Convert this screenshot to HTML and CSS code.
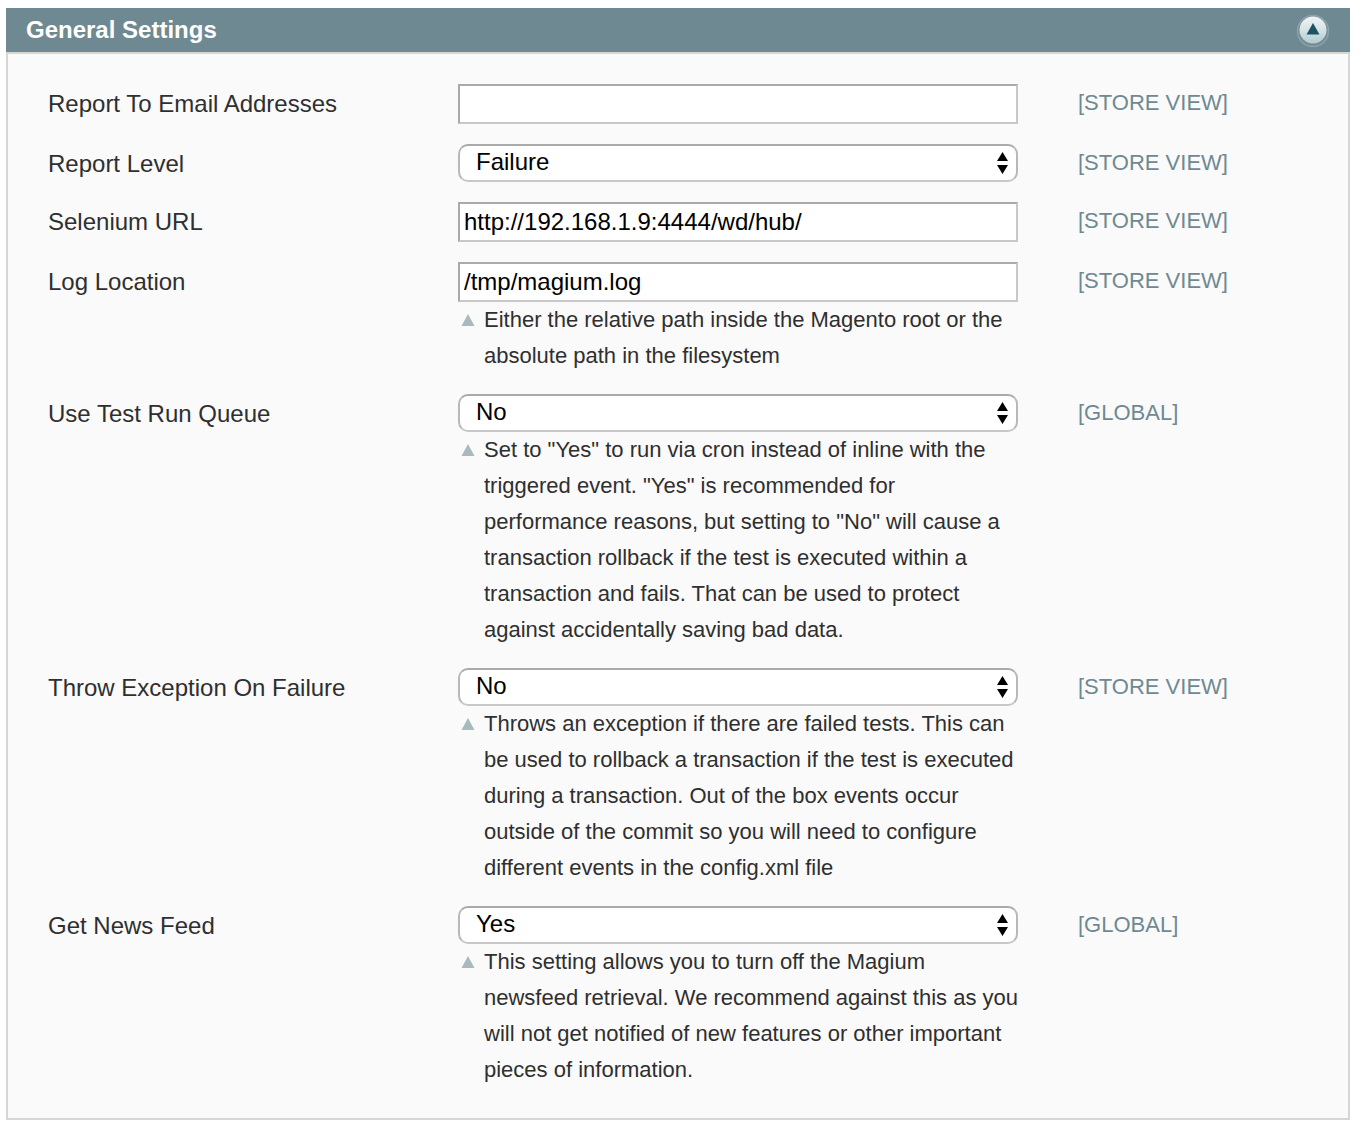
FILE: index.html
```html
<!DOCTYPE html>
<html lang="en">
<head>
  <meta charset="utf-8">
  <meta name="viewport" content="width=device-width, initial-scale=1">
  <title>General Settings</title>
  <link rel="stylesheet" href="styles.css">
</head>
<body>
  <svg width="0" height="0" class="symbols" aria-hidden="true">
    <symbol id="hint" viewBox="0 0 14 12"><path d="M7 0L13.500 12H0.500z" fill="#a9babf"/></symbol>
    <symbol id="updown" viewBox="0 0 12 22"><path d="M6.500 0L12 9H1zM1 13H12L6.500 22z"/></symbol>
  </svg>
  <section class="section">
    <header class="section-head">
      <h2 class="section-title">General Settings</h2>
      <button class="toggle" type="button" aria-label="Collapse General Settings" aria-expanded="true">
        <svg width="34" height="34" viewBox="0 0 34 34" aria-hidden="true">
          <defs>
            <linearGradient id="disc" x1="0" y1="0" x2="0" y2="1">
              <stop offset="0" stop-color="#f0f5f6"/>
              <stop offset="0.5" stop-color="#d5e2e4"/>
              <stop offset="1" stop-color="#b0ccd0"/>
            </linearGradient>
          </defs>
          <circle cx="17" cy="17" r="15.5" fill="#748d95" stroke="#8ba2a8" stroke-width="1.5"/>
          <circle cx="17" cy="16" r="13.5" fill="url(#disc)"/>
          <path d="M17 9L23.500 20.500H10.500z" fill="#1f5260"/>
        </svg>
      </button>
    </header>
    <form class="fields">
      <div class="row">
        <label class="label" for="email">Report To Email Addresses</label>
        <div class="control"><input class="text" id="email" type="text"></div>
        <span class="scope">[STORE VIEW]</span>
      </div>
      <div class="row">
        <label class="label" for="level">Report Level</label>
        <div class="control">
          <div class="select-box">
            <select class="select" id="level"><option>Failure</option></select>
            <svg class="arrows" width="12" height="22" aria-hidden="true"><use href="#updown"/></svg>
          </div>
        </div>
        <span class="scope">[STORE VIEW]</span>
      </div>
      <div class="row">
        <label class="label" for="selenium">Selenium URL</label>
        <div class="control"><input class="text" id="selenium" type="text" value="http://192.168.1.9:4444/wd/hub/"></div>
        <span class="scope">[STORE VIEW]</span>
      </div>
      <div class="row">
        <label class="label" for="log">Log Location</label>
        <div class="control">
          <input class="text" id="log" type="text" value="/tmp/magium.log">
          <div class="note">
            <svg class="hint" width="14" height="12" aria-hidden="true"><use href="#hint"/></svg>
            <p class="note-text">Either the relative path inside the Magento root or the absolute path in the filesystem</p>
          </div>
        </div>
        <span class="scope">[STORE VIEW]</span>
      </div>
      <div class="row">
        <label class="label" for="queue">Use Test Run Queue</label>
        <div class="control">
          <div class="select-box">
            <select class="select" id="queue"><option>Yes</option><option selected>No</option></select>
            <svg class="arrows" width="12" height="22" aria-hidden="true"><use href="#updown"/></svg>
          </div>
          <div class="note">
            <svg class="hint" width="14" height="12" aria-hidden="true"><use href="#hint"/></svg>
            <p class="note-text">Set to "Yes" to run via cron instead of inline with the triggered event. "Yes" is recommended for performance reasons, but setting to "No" will cause a transaction rollback if the test is executed within a transaction and fails. That can be used to protect against accidentally saving bad data.</p>
          </div>
        </div>
        <span class="scope">[GLOBAL]</span>
      </div>
      <div class="row">
        <label class="label" for="throw">Throw Exception On Failure</label>
        <div class="control">
          <div class="select-box">
            <select class="select" id="throw"><option>Yes</option><option selected>No</option></select>
            <svg class="arrows" width="12" height="22" aria-hidden="true"><use href="#updown"/></svg>
          </div>
          <div class="note">
            <svg class="hint" width="14" height="12" aria-hidden="true"><use href="#hint"/></svg>
            <p class="note-text">Throws an exception if there are failed tests. This can be used to rollback a transaction if the test is executed during a transaction. Out of the box events occur outside of the commit so you will need to configure different events in the config.xml file</p>
          </div>
        </div>
        <span class="scope">[STORE VIEW]</span>
      </div>
      <div class="row">
        <label class="label" for="news">Get News Feed</label>
        <div class="control">
          <div class="select-box">
            <select class="select" id="news"><option selected>Yes</option><option>No</option></select>
            <svg class="arrows" width="12" height="22" aria-hidden="true"><use href="#updown"/></svg>
          </div>
          <div class="note">
            <svg class="hint" width="14" height="12" aria-hidden="true"><use href="#hint"/></svg>
            <p class="note-text">This setting allows you to turn off the Magium newsfeed retrieval. We recommend against this as you will not get notified of new features or other important pieces of information.</p>
          </div>
        </div>
        <span class="scope">[GLOBAL]</span>
      </div>
    </form>
  </section>
</body>
</html>
```
FILE: styles.css
```css
* {
  box-sizing: border-box;
}

body {
  margin: 0;
  padding: 8px 12px 8px 6px;
  background: #fff;
  color: #2f2f2f;
  font-family: "Liberation Sans", Arial, Helvetica, sans-serif;
  font-size: 24px;
}

.symbols {
  position: absolute;
}

.section-head {
  display: flex;
  align-items: center;
  justify-content: space-between;
  height: 44px;
  padding: 0 20px;
  background: #6f8992;
}

.section-title {
  margin: 0;
  color: #fff;
  font-size: 24px;
  line-height: 44px;
}

.toggle {
  display: block;
  width: 34px;
  height: 34px;
  margin-top: 2px;
  padding: 0;
  border: 0;
  background: none;
}

.toggle svg {
  display: block;
}

.fields {
  padding: 20px 40px;
  border: 2px solid #d6d6d6;
  background: #fafafa;
}

.row {
  display: grid;
  grid-template-columns: minmax(0, 350px) minmax(0, 560px) minmax(150px, 1fr);
  column-gap: 60px;
  align-items: start;
  padding: 10px 0;
}

.label {
  padding-top: 2px;
  line-height: 36px;
}

.scope {
  padding-top: 1px;
  color: #6f8992;
  font-size: 22px;
  line-height: 36px;
}

.text,
.select {
  display: block;
  width: 100%;
  margin: 0;
  border: 2px solid;
  border-color: #aaa #c8c8c8 #c8c8c8 #aaa;
  background: #fff;
  color: #000;
  font: inherit;
}

.text {
  height: 40px;
  padding: 0 4px;
  border-radius: 0;
}

.select-box {
  position: relative;
}

.select {
  height: 38px;
  padding: 0 32px 4px 16px;
  border-color: #aaa #b8b8b8 #c8c8c8;
  border-radius: 10px;
  appearance: none;
}

.arrows {
  position: absolute;
  top: 8px;
  right: 10px;
  pointer-events: none;
}

.note {
  display: flex;
  gap: 9px;
  padding-left: 3px;
  font-size: 22px;
  line-height: 36px;
}

.hint {
  flex: none;
  margin-top: 12px;
}

.note-text {
  margin: 0;
}
```
